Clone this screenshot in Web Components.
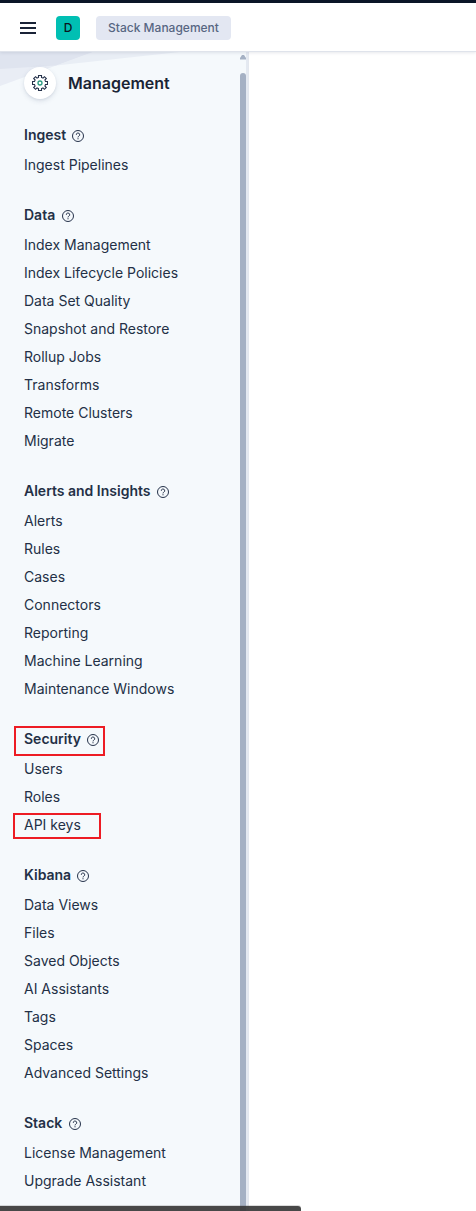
<!DOCTYPE html>
<html lang="en">
<head>
<meta charset="utf-8">
<title>Stack Management</title>
<style>
html,body{margin:0;height:100%;overflow:hidden;background:#fff}
body{font:14px/28px Inter,"Liberation Sans",sans-serif;color:#233046}
</style>
</head>
<body>
<kbn-app></kbn-app>
<script>
const define = (name, html) => customElements.define(name, class extends HTMLElement {
  constructor() {
    super();
    const t = document.createElement('template');
    t.innerHTML = html;
    this.attachShadow({mode: 'open'}).append(t.content.cloneNode(true));
  }
});

define('kbn-help', `
<style>:host{display:block;width:12px;height:12px}svg{display:block}</style>
<svg width="12" height="12" viewBox="0 0 12 12" fill="none" stroke="#25324a" stroke-width="1"><circle cx="6" cy="6" r="5.5"/><path d="M4.3 4.8a1.7 1.7 0 1 1 2.5 1.4C6.2 6.5 6 6.7 6 7.4"/><path d="M6 8.2v1.1"/></svg>`);

define('kbn-header', `
<style>
:host{display:flex;box-sizing:border-box;height:52px;border-top:3px solid #0b1628;border-bottom:1px solid #dfe3eb;background:#fff;align-items:center;padding:1px 20px 0;box-shadow:0 1px 3px rgba(60,75,110,.13);position:relative;z-index:2}
.menu{width:16px;height:12px;display:flex;flex-direction:column;justify-content:space-between}
.menu i{height:2px;background:#1a2337}
.space{margin-left:20px;width:24px;height:24px;border-radius:4px;background:#00bfb3;color:#0b1420;font-size:12px;font-weight:500;line-height:24px;text-align:center}
.crumb{margin-left:16px;width:135px;height:24px;border-radius:4px;background:#e3e7f2;color:#576682;font-size:12px;font-weight:500;line-height:24px;text-align:center}
</style>
<div class="menu"><i></i><i></i><i></i></div>
<div class="space">D</div>
<div class="crumb">Stack Management</div>`);

define('kbn-title', `
<style>
:host{display:flex;align-items:center;height:32px;gap:12px;color:#1a2435;font-size:16px;font-weight:600;line-height:24px}
.badge{width:32px;height:32px;border-radius:50%;background:#fff;box-shadow:0 2px 5px rgba(60,75,110,.14),0 1px 2px rgba(60,75,110,.08);display:grid;place-items:center}
svg{display:block}
</style>
<div class="badge"><svg width="16" height="16" viewBox="0 0 16 16" fill="none"><path stroke="#25314a" stroke-width="1.1" d="M6.5 2.5v-2h3v2l1.5.6 1.4-1.4 1.9 1.9L12.9 5l.6 1.5h2v3h-2l-.6 1.5 1.4 1.4-1.9 1.9-1.4-1.4-1.5.6v2h-3v-2L5 12.9l-1.4 1.4-1.9-1.9L3.1 11l-.6-1.5h-2v-3h2L3.1 5 1.7 3.6l1.9-1.9L5 3.1z"/><circle cx="8" cy="8" r="2" stroke="#299a80" stroke-width="1.3"/></svg></div>
<slot></slot>`);

define('kbn-link', `<style>:host{display:block;height:28px;line-height:28px;white-space:nowrap}</style><slot></slot>`);

define('kbn-group', `
<style>
:host{display:block;margin-bottom:24px}
.head{display:flex;gap:6px;align-items:center;height:24px;margin-bottom:4px;font-weight:600;line-height:24px;white-space:nowrap}
.label{width:var(--label)}
kbn-help{margin-top:1px}
</style>
<div class="head"><div class="label"><slot name="head"></slot></div><kbn-help></kbn-help></div>
<slot></slot>`);

define('kbn-mark', `<style>:host{position:absolute;box-sizing:border-box;border:2px solid #ed1c24}</style>`);

const groups = [
  [42, 'Ingest', 'Ingest Pipelines'],
  [32, 'Data', 'Index Management', 'Index Lifecycle Policies', 'Data Set Quality', 'Snapshot and Restore', 'Rollup Jobs', 'Transforms', 'Remote Clusters', 'Migrate'],
  [127, 'Alerts and Insights', 'Alerts', 'Rules', 'Cases', 'Connectors', 'Reporting', 'Machine Learning', 'Maintenance Windows'],
  [57, 'Security', 'Users', 'Roles', 'API keys'],
  [47, 'Kibana', 'Data Views', 'Files', 'Saved Objects', 'AI Assistants', 'Tags', 'Spaces', 'Advanced Settings'],
  [39, 'Stack', 'License Management', 'Upgrade Assistant']
];

define('kbn-scrollbar', `
<style>
:host{display:flex;flex-direction:column;align-items:center;width:6px;padding-top:3px;gap:13px}
svg{display:block;flex:none}
.thumb{flex:1;width:6px;border-radius:3px 3px 0 0;background:#a5b1c4}
</style>
<svg width="6" height="5" viewBox="0 0 6 5"><path d="M2 0h2l2 3v1.5H0V3z" fill="#a5b1c4"/></svg>
<div class="thumb"></div>`);

define('kbn-sidebar', `
<style>
:host{display:flex;box-sizing:border-box;width:249px;background:#f5f9fc;overflow:hidden;position:relative;border-right:1px solid #e3e7ee}
.art{position:absolute;left:0;top:0}
nav{position:relative;box-sizing:border-box;width:240px;padding:15px 0 0 24px}
kbn-title{margin-bottom:24px}
kbn-scrollbar{position:relative}
.edge{position:relative;width:2px;background:#e4e9f1}
</style>
<svg class="art" width="240" height="50" viewBox="0 0 240 50"><path d="M0 0h93L0 34z" fill="#e9edf5"/><path d="M93 0h87L56 13.5z" fill="#e9eef5"/><path d="M0 0h93L56 13.5 0 17z" fill="#dfe4ef"/></svg>
<nav><kbn-title>Management</kbn-title>${groups.map(([w, h, ...l]) => `<kbn-group style="--label:${w}px"><span slot="head">${h}</span>${l.map(t => `<kbn-link>${t}</kbn-link>`).join('')}</kbn-group>`).join('')}</nav>
<kbn-scrollbar></kbn-scrollbar><div class="edge"></div>`);

define('kbn-app', `
<style>
:host{display:flex;flex-direction:column;height:100vh;position:relative;overflow:hidden}
kbn-sidebar{flex:1;min-height:0}
.m1{left:14px;top:726px;width:91px;height:30px}
.m2{left:13px;top:813px;width:88px;height:26px}
.status{position:absolute;left:0;bottom:0;width:301px;height:5px;background:rgba(56,56,56,.92);border-radius:0 3px 0 0;box-shadow:0 -1px 0 rgba(80,80,80,.2)}
</style>
<kbn-header></kbn-header>
<kbn-sidebar></kbn-sidebar>
<kbn-mark class="m1"></kbn-mark><kbn-mark class="m2"></kbn-mark>
<div class="status"></div>`);
</script>
</body>
</html>
